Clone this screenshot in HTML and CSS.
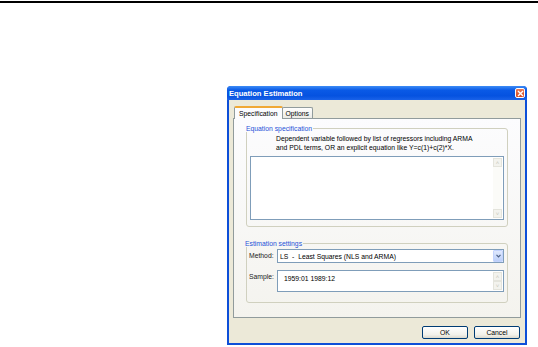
FILE: index.html
```html
<!DOCTYPE html>
<html lang="en">
<head>
  <meta charset="UTF-8" />
  <title>Equation Estimation</title>
  <link rel="stylesheet" href="styles.css">
</head>
<body>

  <div class="rule"></div>

  <div class="dialog">
    <div class="titlebar">
      <span class="title">Equation Estimation</span>
      <div class="close">
        <svg width="7" height="7" viewBox="0 0 7 7"><path d="M1 1L6 6M6 1L1 6" stroke="#fff" stroke-width="1.4"/></svg>
      </div>
    </div>

    <div class="body">
      <div class="tabs">
        <div class="tab active">Specification</div>
        <div class="tab">Options</div>
      </div>

      <div class="panel">
        <fieldset class="group spec">
          <legend>Equation specification</legend>
          <p class="hint">Dependent variable followed by list of regressors including ARMA<br>and PDL terms, OR an explicit equation like Y=c(1)+c(2)*X.</p>
          <div class="textbox big">
            <div class="vscroll">
              <span class="arrow">&#708;</span>
              <span class="arrow">&#709;</span>
            </div>
          </div>
        </fieldset>

        <fieldset class="group est">
          <legend>Estimation settings</legend>
          <div class="row">
            <span class="label">Method:</span>
            <div class="select">
              <span>LS&nbsp; - &nbsp;Least Squares (NLS and ARMA)</span>
              <span class="drop">
                <svg width="5" height="4" viewBox="0 0 5 4"><path d="M0.5 0.8L2.5 2.8L4.5 0.8" stroke="#4d6185" stroke-width="1.2" fill="none"/></svg>
              </span>
            </div>
          </div>
          <div class="row">
            <span class="label">Sample:</span>
            <div class="textbox sample">
              <span class="value">1959:01 1989:12</span>
              <div class="vscroll">
                <span class="arrow">&#708;</span>
                <span class="arrow">&#709;</span>
              </div>
            </div>
          </div>
        </fieldset>
      </div>

      <div class="buttons">
        <button type="button">OK</button>
        <button type="button">Cancel</button>
      </div>
    </div>
  </div>

</body>
</html>
```

FILE: styles.css
```css
* { box-sizing: border-box; }
body {
  margin: 0;
  background: #fff;
  font-family: 'Liberation Sans', Arial, sans-serif;
  font-size: 6.8px;
  color: #000;
}
.rule {
  margin-top: 1px;
  height: 2px;
  background: #000;
}
.dialog {
  margin: 83px 0 0 227px;
  width: 300px;
  height: 259px;
  background: #0d4fd8;
  border-radius: 4px 4px 0 0;
  padding: 0 2px 2px 2px;
  display: flex;
  flex-direction: column;
}
.titlebar {
  height: 14px;
  display: flex;
  align-items: center;
  justify-content: space-between;
  padding: 0 2px 0 2px;
  background: linear-gradient(#3d8cf6, #0a5ae6 30%, #0552e0 70%, #1a62e8);
  margin: 0 -2px;
  border-radius: 4px 4px 0 0;
}
.title {
  color: #fff;
  font-weight: bold;
  font-size: 7.6px;
}
.close {
  width: 10px;
  height: 10px;
  border: 1px solid #fff;
  border-radius: 2px;
  background: linear-gradient(#e97a55, #d6451f);
  display: flex;
  align-items: center;
  justify-content: center;
}
.body {
  flex: 1;
  background: #ece9d8;
  padding: 5px 4px 0 4px;
  display: flex;
  flex-direction: column;
}
.tabs {
  display: flex;
  align-items: flex-end;
  height: 13px;
  padding-left: 2px;
}
.tab {
  height: 11px;
  padding: 0 3px;
  border: 1px solid #919b9c;
  border-bottom: none;
  border-radius: 2px 2px 0 0;
  background: linear-gradient(#fefefe, #ecebe6);
  display: flex;
  align-items: center;
  margin-left: -1px;
}
.tab.active {
  height: 13px;
  padding: 0 4px;
  background: #fcfcfe;
  border-top: 2px solid #f0a835;
  margin-bottom: -1px;
  position: relative;
  z-index: 1;
}
.panel {
  height: 200px;
  border: 1px solid #919b9c;
  background: linear-gradient(#fcfcfe, #f4f3ee);
  padding: 6px 12px 0 12px;
}
.group {
  margin: 0;
  border: 1px solid #d0d0bf;
  border-radius: 3px;
  min-width: 0;
}
.group legend {
  color: #1f52d8;
  padding: 0 1px;
  margin-left: -5px;
}
.spec {
  height: 102px;
  padding: 2px 3px 0 3px;
}
.hint {
  margin: 0 0 4px 26px;
  line-height: 9px;
}
.textbox {
  background: #fff;
  border: 1px solid #7f9db9;
  display: flex;
}
.textbox.big {
  height: 64px;
}
.vscroll {
  width: 9px;
  margin: 1px 1px 1px auto;
  background: #fbfbf8;
  display: flex;
  flex-direction: column;
  justify-content: space-between;
}
.arrow {
  height: 9px;
  background: #f3f3ee;
  border: 1px solid #e4e4dc;
  color: #c6c6bb;
  font-size: 6px;
  display: flex;
  align-items: center;
  justify-content: center;
  line-height: 1;
}
.est {
  margin-top: 13px;
  height: 63px;
  padding: 2px 3px 0 2px;
}
.row {
  display: flex;
  align-items: flex-start;
  margin-bottom: 7px;
}
.label {
  width: 28px;
  color: #222;
  padding-top: 3px;
}
.select {
  width: 227px;
  height: 14px;
  border: 1px solid #7f9db9;
  background: #fff;
  display: flex;
  align-items: center;
  justify-content: space-between;
  padding-left: 2px;
}
.drop {
  width: 10px;
  height: 12px;
  background: linear-gradient(#dfe8fd, #bccff9);
  border: 1px solid #c3d3fd;
  border-radius: 1px;
  display: flex;
  align-items: center;
  justify-content: center;
}
.textbox.sample {
  width: 227px;
  height: 22px;
}
.value {
  padding: 4px 0 0 6px;
}
.buttons {
  display: flex;
  justify-content: flex-end;
  gap: 6px;
  padding: 8px 1px 0 0;
}
button {
  width: 46px;
  height: 13px;
  font-family: inherit;
  font-size: 6.8px;
  color: #000;
  border: 1px solid #003c74;
  border-radius: 2px;
  background: linear-gradient(#ffffff, #f2f1ea 70%, #dcd9cd);
  padding: 0;
}
```
